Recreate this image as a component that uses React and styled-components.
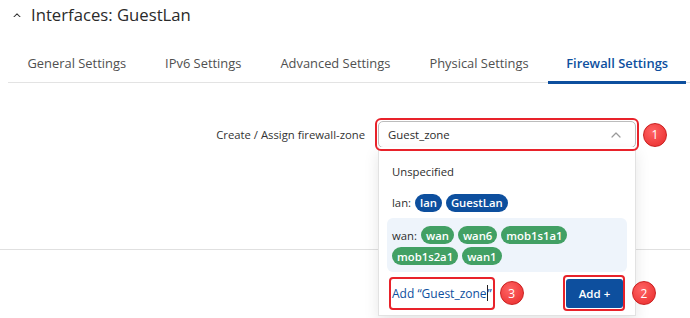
import React from "react";
import styled, { createGlobalStyle, css } from "styled-components";

const Global = createGlobalStyle`
  html, body { margin: 0; padding: 0; background: #fff; }
  body { font-family: "Open Sans", "Noto Sans", sans-serif; color: #333; overflow: hidden; }
  * { box-sizing: border-box; }
`;

const BLUE = "#0d4f9e";
const GREEN = "#42a064";
const RED = "#e8222a";

const Page = styled.div`
  width: 690px;
  height: 318px;
  position: relative;
  overflow: hidden;
  background: #fff;
`;

const Header = styled.div`
  display: flex;
  align-items: center;
  gap: 10px;
  height: 30px;
  padding-left: 13px;
`;

const Title = styled.h2`
  margin: 0;
  font-size: 16.7px;
  font-weight: 400;
  line-height: 22px;
  color: #2a2a2a;
`;

const TabBar = styled.div`
  display: flex;
  margin: 16px 0 0 8px;
  border-bottom: 1px solid #e3e3e3;
`;

const Tab = styled.div`
  position: relative;
  padding: 8px 19.5px 9px;
  font-size: 12.9px;
  line-height: 19px;
  color: #505050;
  white-space: nowrap;
  ${(p) =>
    p.$active &&
    css`
      color: ${BLUE};
      font-weight: 600;
      padding: 8px 18px 9px;
      &::after {
        content: "";
        position: absolute;
        left: 0;
        right: 0;
        bottom: -2px;
        height: 3px;
        background: ${BLUE};
      }
    `}
`;

const FormRow = styled.div`
  display: grid;
  grid-template-columns: 365px auto auto;
  column-gap: 10px;
  align-items: center;
  justify-content: start;
  margin-top: 35px;
`;

const Label = styled.label`
  text-align: right;
  font-size: 11.3px;
  color: #333;
`;

const Annot = styled.div`
  position: relative;
  padding: ${(p) => p.$pad || "3px"};
  &::after {
    content: "";
    position: absolute;
    inset: 0;
    border: 2px solid ${RED};
    border-radius: ${(p) => p.$radius || "6px"};
    z-index: 5;
    pointer-events: none;
  }
`;

const SelectBox = styled.div`
  position: relative;
  width: 258px;
  height: 27px;
  border: 1px solid #bcbcbc;
  border-radius: 5px;
  display: flex;
  align-items: center;
  justify-content: space-between;
  padding: 0 14px 0 9px;
  font-size: 11.4px;
  color: #2d2d2d;
  background: #fff;
`;

const Step = styled.span`
  position: ${(p) => (p.$float ? "absolute" : "static")};
  left: ${(p) => p.$left || "auto"};
  top: 50%;
  transform: ${(p) => (p.$float ? "translateY(-50%)" : "none")};
  margin-left: ${(p) => (p.$float ? "0" : "-6px")};
  width: 24px;
  height: 24px;
  border-radius: 50%;
  background: radial-gradient(circle at 40% 35%, #ff6464, #ef3b3b 70%);
  border: 1px solid #c92020;
  color: #fff;
  font-size: 12px;
  display: inline-flex;
  align-items: center;
  justify-content: center;
  z-index: 6;
`;

const Dropdown = styled.div`
  position: absolute;
  top: 100%;
  left: -1px;
  width: 258px;
  height: 169px;
  background: #fff;
  border: 1px solid #e2e2e2;
  border-top: none;
  box-shadow: 0 6px 14px rgba(0, 0, 0, 0.1);
  padding: 9px 8px 0;
  z-index: 4;
  display: flex;
  flex-direction: column;
`;

const Option = styled.div`
  display: flex;
  align-items: center;
  gap: 4px;
  height: 31px;
  padding: 0 5px;
  font-size: 11.3px;
  color: #2d2d2d;
`;

const Group = styled.div`
  display: flex;
  flex-wrap: wrap;
  align-items: center;
  gap: 3px 4px;
  padding: 8px 5px 7px;
  background: #eef4fb;
  border-radius: 6px;
  font-size: 11.3px;
  color: #2d2d2d;
`;

const Chip = styled.span`
  display: inline-flex;
  align-items: center;
  height: 18px;
  padding: 0 5px;
  border-radius: 9px;
  background: ${(p) => (p.$green ? GREEN : BLUE)};
  color: #fff;
  font-size: 11.3px;
  font-weight: 600;
`;

const Footer = styled.div`
  display: flex;
  align-items: center;
  justify-content: space-between;
  margin-top: 3px;
  padding: 0 2px;
`;

const AddText = styled.div`
  height: 27px;
  display: flex;
  align-items: center;
  padding-right: 1px;
  font-size: 12px;
  color: ${BLUE};
`;

const Caret = styled.span`
  display: inline-block;
  width: 1px;
  height: 16px;
  background: #222;
`;

const Button = styled.button`
  width: 57px;
  height: 29px;
  border: none;
  border-radius: 3px;
  background: ${BLUE};
  color: #fff;
  font-family: inherit;
  font-size: 11.5px;
  font-weight: 600;
  padding: 0;
`;

const Divider = styled.div`
  margin-top: 98px;
  border-top: 1px solid #e0e0e0;
`;

const Chevron = ({ size = 9, color = "#333", w = 1.3 }) => (
  <svg width={size} height={size * 0.6} viewBox="0 0 10 6" fill="none">
    <path d="M1 5 L5 1 L9 5" stroke={color} strokeWidth={w} strokeLinecap="round" strokeLinejoin="round" />
  </svg>
);

export default function App() {
  return (
    <Page>
      <Global />
      <Header>
        <Chevron size={8} color="#333" w={1.3} />
        <Title>Interfaces: GuestLan</Title>
      </Header>
      <TabBar>
        <Tab>General Settings</Tab>
        <Tab>IPv6 Settings</Tab>
        <Tab>Advanced Settings</Tab>
        <Tab>Physical Settings</Tab>
        <Tab $active>Firewall Settings</Tab>
      </TabBar>
      <FormRow>
        <Label>Create / Assign firewall-zone</Label>
        <Annot>
          <SelectBox>
            <span>Guest_zone</span>
            <Chevron size={10} color="#9a9a9a" w={1.2} />
            <Dropdown>
              <Option>Unspecified</Option>
              <Option>
                lan: <Chip>lan</Chip>
                <Chip>GuestLan</Chip>
              </Option>
              <Group>
                wan: <Chip $green>wan</Chip>
                <Chip $green>wan6</Chip>
                <Chip $green>mob1s1a1</Chip>
                <Chip $green>mob1s2a1</Chip>
                <Chip $green>wan1</Chip>
              </Group>
              <Footer>
                <Annot $pad="3px 2px 3px 3px" $radius="4px">
                  <AddText>
                    Add “Guest_zone<Caret />”
                  </AddText>
                  <Step $float $left="calc(100% + 5px)">3</Step>
                </Annot>
                <Annot $pad="4px 2px 3px 3px" $radius="4px">
                  <Button>Add +</Button>
                  <Step $float $left="calc(100% + 7px)">2</Step>
                </Annot>
              </Footer>
            </Dropdown>
          </SelectBox>
        </Annot>
        <Step>1</Step>
      </FormRow>
      <Divider />
    </Page>
  );
}
